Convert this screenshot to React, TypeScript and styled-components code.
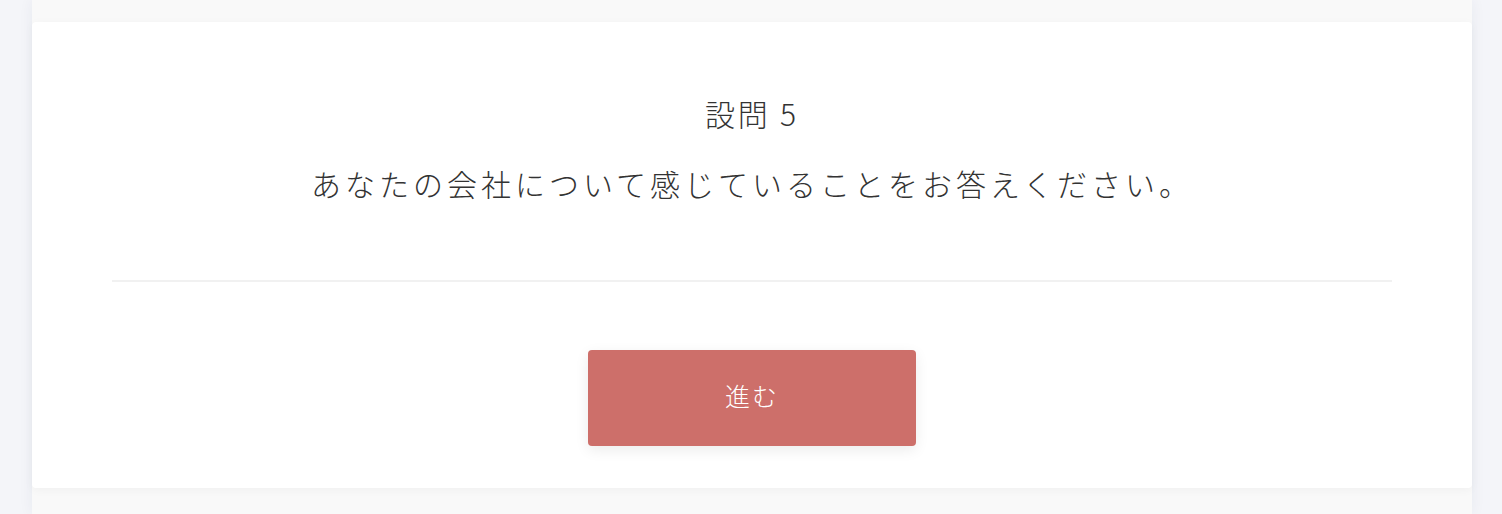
import React from 'react'
import styled, { createGlobalStyle } from 'styled-components'

const GlobalStyle = createGlobalStyle`
  html, body {
    margin: 0;
    padding: 0;
    background: #f4f5f9;
  }
  body {
    font-family: "Noto Sans CJK JP", "Noto Sans", sans-serif;
  }
`

const App = () => {
  return (
    <>
      <GlobalStyle />
      <Page>
        <Card>
          <Heading>設問 5</Heading>
          <Question>あなたの会社について感じていることをお答えください。</Question>
          <Divider />
          <Actions>
            <NextButton type='button'>進む</NextButton>
          </Actions>
        </Card>
      </Page>
    </>
  )
}

export default App

const Page = styled.div`
  width: 1440px;
  min-height: 514px;
  margin-left: 32px;
  padding-top: 22px;
  box-sizing: border-box;
  background: #f9f9f9;
  box-shadow: 0 0 14px rgba(40, 50, 90, 0.06);
`

const Card = styled.div`
  background: #fff;
  border-radius: 4px;
  padding: 71px 80px 42px;
  box-shadow: 0 2px 10px rgba(0, 0, 0, 0.04);
  display: flex;
  flex-direction: column;
  align-items: stretch;
`

const Heading = styled.h2`
  margin: 0;
  font-size: 30px;
  font-weight: 300;
  line-height: 40px;
  letter-spacing: 2.8px;
  color: #333;
  text-align: center;
`

const Question = styled.p`
  margin: 28px 0 0;
  font-size: 30px;
  font-weight: 300;
  line-height: 44px;
  letter-spacing: 4px;
  color: #333;
  text-align: center;
`

const Divider = styled.hr`
  margin: 75px 0 0;
  border: none;
  height: 2px;
  background: #f1f1f1;
`

const Actions = styled.div`
  display: flex;
  justify-content: center;
  margin-top: 68px;
`

const NextButton = styled.button`
  width: 328px;
  height: 96px;
  padding: 0 0 6px;
  border: none;
  border-radius: 4px;
  background: #cd6f6a;
  color: #fff;
  font-family: "Noto Sans CJK JP", "Noto Sans", sans-serif;
  font-size: 25px;
  font-weight: 300;
  letter-spacing: 2px;
  box-shadow: 0 4px 14px rgba(0, 0, 0, 0.08);
  cursor: pointer;
`
